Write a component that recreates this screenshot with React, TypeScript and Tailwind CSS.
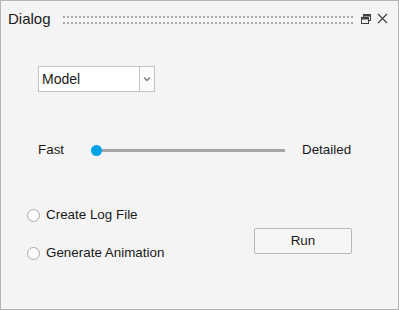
import React from "react";

export default function App() {
  const font = { fontFamily: '"Liberation Sans", Arial, sans-serif' };
  return (
    <div
      className="w-[399px] h-[310px] border border-[#b4b4b4] bg-[#f4f4f4] text-[#1a1a1a] flex flex-col"
      style={font}
    >
      {/* Title bar */}
      <div className="h-[35px] flex items-center pl-[7px] pr-[9px] shrink-0">
        <span className="text-[15px] leading-none w-[55px]">Dialog</span>
        <svg width="292" height="8" className="block shrink-0 mt-[2px]">
          <defs>
            <pattern id="grip" x="0" y="0" width="4" height="6" patternUnits="userSpaceOnUse">
              <rect x="0" y="0" width="2" height="2" fill="#a8a8a8" />
            </pattern>
          </defs>
          <rect x="0" y="0" width="292" height="8" fill="url(#grip)" />
        </svg>
        <svg width="12" height="12" viewBox="0 0 12 12" className="ml-[5px] shrink-0">
          <rect x="3.5" y="1.5" width="7" height="6" fill="none" stroke="#404040" strokeWidth="1" />
          <rect x="3.5" y="1.5" width="7" height="2" fill="#404040" />
          <rect x="1.5" y="4.5" width="7" height="6" fill="#f4f4f4" stroke="#404040" strokeWidth="1" />
          <rect x="1.5" y="4.5" width="7" height="2" fill="#404040" />
        </svg>
        <svg width="11" height="11" viewBox="0 0 11 11" className="ml-[5px] shrink-0">
          <path d="M1 1 L10 10 M10 1 L1 10" stroke="#404040" strokeWidth="1.2" />
        </svg>
      </div>

      {/* Select */}
      <div className="mt-[30px] ml-[37px] flex h-[26px] w-[117px]">
        <div className="flex-1 border border-[#c4c4c4] bg-white flex items-center pl-[3px] text-[14px]">
          Model
        </div>
        <div className="w-[15px] border border-l-0 border-[#c4c4c4] bg-[#fbfbfb] flex items-center justify-center">
          <svg width="8" height="6" viewBox="0 0 8 6">
            <path d="M1 1.5 L4 4.5 L7 1.5" stroke="#808080" strokeWidth="1.5" fill="none" />
          </svg>
        </div>
      </div>

      {/* Slider row */}
      <div className="mt-[48px] h-[20px] flex items-center text-[13.4px]">
        <span className="ml-[37px] w-[52px]">Fast</span>
        <div className="relative w-[195px] h-[11px] flex items-center">
          <div className="ml-[2px] w-[193px] h-[3px] bg-[#a5a5a5]" />
          <div className="absolute left-[1px] top-0 w-[11px] h-[11px] rounded-full bg-[#00a3e6]" />
        </div>
        <span className="ml-[17px]">Detailed</span>
      </div>

      {/* Lower section */}
      <div className="mt-[45px] flex">
        <div className="ml-[26px] flex flex-col gap-[18px] text-[13.4px]">
          <div className="h-[20px] flex items-center">
            <div className="w-[13px] h-[13px] rounded-full border border-[#a9a9a9] bg-[#fcfcfc]" />
            <span className="ml-[6px] mt-[1px]">Create Log File</span>
          </div>
          <div className="h-[20px] flex items-center">
            <div className="w-[13px] h-[13px] rounded-full border border-[#a9a9a9] bg-[#fcfcfc]" />
            <span className="ml-[6px] mt-[1px]">Generate Animation</span>
          </div>
        </div>
        <button className="ml-auto mr-[46px] mt-[23px] w-[98px] h-[26px] border border-[#b8b8b8] rounded-[2px] bg-[#f6f6f6] text-[13.4px] flex items-center justify-center">
          <span className="mt-[1px]">Run</span>
        </button>
      </div>
    </div>
  );
}
